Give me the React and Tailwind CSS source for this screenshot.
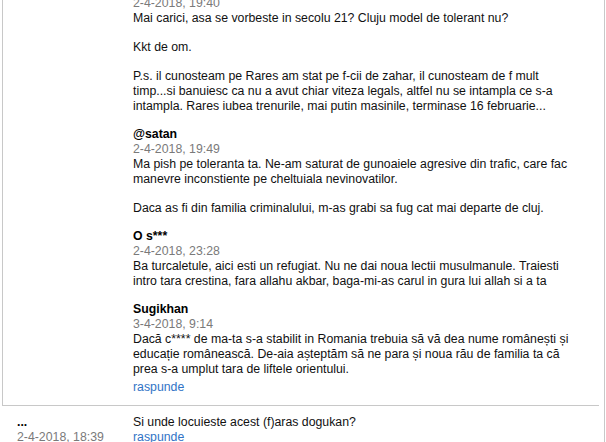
const replies = [
  {
    author: 'Anonim',
    date: '2-4-2018, 19:40',
    body: [
      ['Mai carici, asa se vorbeste in secolu 21? Cluju model de tolerant nu?'],
      ['Kkt de om.'],
      [
        'P.s. il cunosteam pe Rares am stat pe f-cii de zahar, il cunosteam de f mult',
        'timp...si banuiesc ca nu a avut chiar viteza legals, altfel nu se intampla ce s-a',
        'intampla. Rares iubea trenurile, mai putin masinile, terminase 16 februarie...',
      ],
    ],
  },
  {
    author: '@satan',
    date: '2-4-2018, 19:49',
    body: [
      [
        'Ma pish pe toleranta ta. Ne-am saturat de gunoaiele agresive din trafic, care fac',
        'manevre inconstiente pe cheltuiala nevinovatilor.',
      ],
      ['Daca as fi din familia criminalului, m-as grabi sa fug cat mai departe de cluj.'],
    ],
  },
  {
    author: 'O s***',
    date: '2-4-2018, 23:28',
    body: [
      [
        'Ba turcaletule, aici esti un refugiat. Nu ne dai noua lectii musulmanule. Traiesti',
        'intro tara crestina, fara allahu akbar, baga-mi-as carul in gura lui allah si a ta',
      ],
    ],
  },
  {
    author: 'Sugikhan',
    date: '3-4-2018, 9:14',
    body: [
      [
        'Dacă c**** de ma-ta s-a stabilit in Romania trebuia să vă dea nume românești și',
        'educație românească. De-aia așteptăm să ne para și noua rău de familia ta că',
        'prea s-a umplut tara de liftele orientului.',
      ],
    ],
  },
]

function Reply({ reply, last }) {
  return (
    <div className={last ? '' : 'mb-[13px]'}>
      <div className="font-bold text-black">{reply.author}</div>
      <div className="text-[#7a7a7a]">{reply.date}</div>
      <div className="flex flex-col gap-[14px]">
        {reply.body.map((para, i) => (
          <p key={i}>
            {para.map((line, j) => (
              <span key={j} className="block whitespace-nowrap">
                {line}
              </span>
            ))}
          </p>
        ))}
      </div>
    </div>
  )
}

export default function App() {
  return (
    <div className="h-[442px] w-[606px] overflow-hidden bg-white font-['Liberation_Sans',Arial,sans-serif] text-[12.3px] leading-[15px] text-[#111]">
      <div className="h-full w-[605px] border-r border-[#c8c8c8]">
        {/* comentariu cu raspunsuri */}
        <div className="mr-[5px] ml-[2px] flex border-b border-l border-[#c8c8c8] pb-[10px]">
          <div className="w-[130px] shrink-0"></div>
          <div className="-mt-[19px] flex-1">
            {replies.map((r, i) => (
              <Reply key={i} reply={r} last={i === replies.length - 1} />
            ))}
            <a className="mt-[3px] block text-[#3174c6]">raspunde</a>
          </div>
        </div>

        {/* comentariu urmator */}
        <div className="flex pt-[9px]">
          <div className="w-[133px] shrink-0 pl-[17px]">
            <div className="font-bold text-black">...</div>
            <div className="text-[#7a7a7a]">2-4-2018, 18:39</div>
          </div>
          <div className="flex-1">
            <p>Si unde locuieste acest (f)aras dogukan?</p>
            <a className="block text-[#3174c6]">raspunde</a>
          </div>
        </div>
      </div>
    </div>
  )
}
